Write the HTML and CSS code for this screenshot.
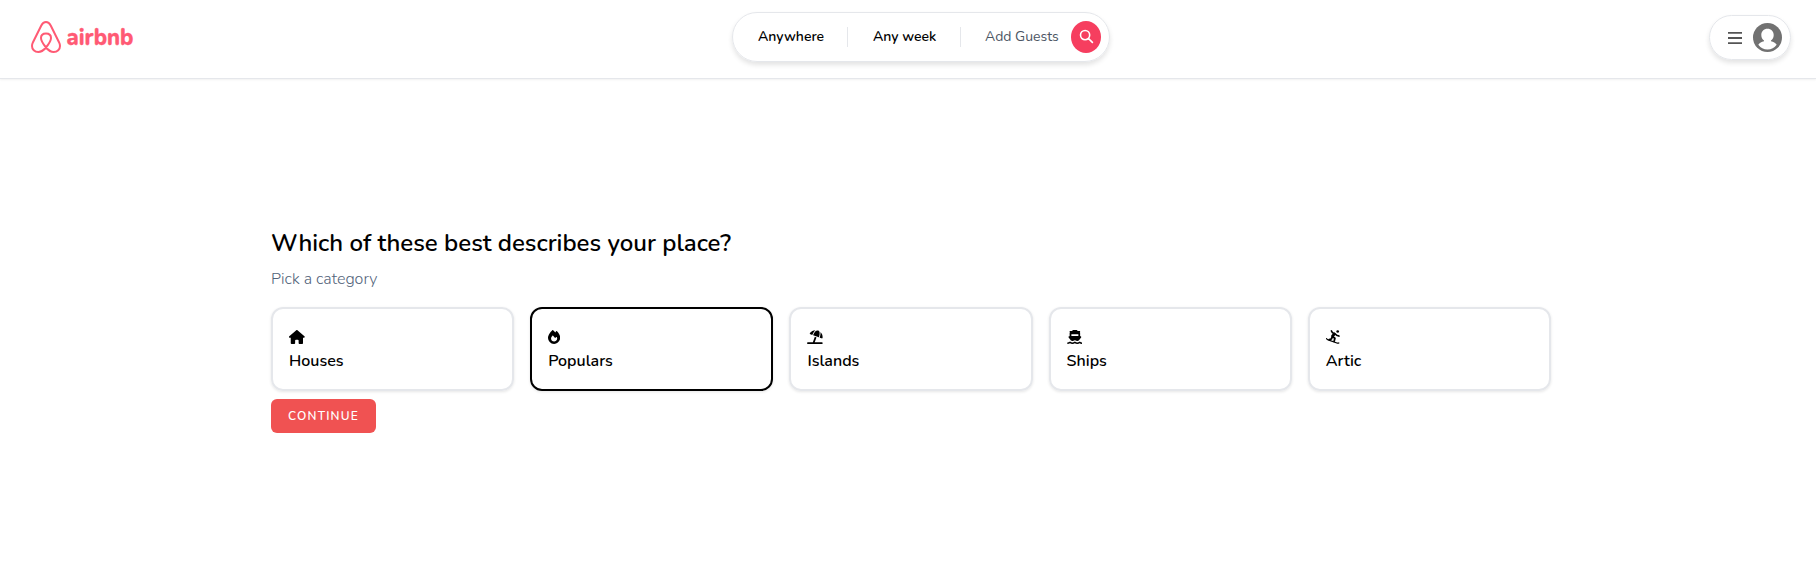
FILE: index.html
```
<!DOCTYPE html>
<html lang="en">
<head>
<meta charset="utf-8">
<title>airbnb</title>
<link rel="stylesheet" href="styles.css">
</head>
<body>
<header class="header">
  <a class="brand">
    <svg class="brand-mark" viewBox="0 0 30 32" fill="none" stroke="#ff5a74" stroke-width="2" stroke-linejoin="round"><path d="M15 26.5C12 22.8 10 19.600 10 17C10 14.200 12 12.500 15 12.500S20 14.200 20 17C20 19.600 18 22.800 15 26.500C12.400 29.600 10 31 7.300 31C3.600 31 1 28.200 1 24.900C1 23.700 1.400 22.500 2 21.200L10.300 4.500C11.500 2.100 12.800 1 15 1S18.500 2.100 19.700 4.500L28 21.200C28.600 22.500 29 23.700 29 24.900C29 28.200 26.400 31 22.700 31C20 31 17.600 29.600 15 26.500Z"/></svg>
    <svg class="brand-name" viewBox="0 0 68 26"><text x="-.5" y="20.500" textLength="67" lengthAdjust="spacingAndGlyphs">airbnb</text></svg>
  </a>
  <div class="search">
    <span class="seg where">Anywhere</span>
    <span class="seg week">Any week</span>
    <span class="seg guests">Add Guests</span>
    <span class="search-btn"><svg viewBox="0 0 16 16" fill="none" stroke="#fff" stroke-width="1.700" stroke-linecap="round"><circle cx="6.500" cy="6.500" r="4.900"/><path d="M10.200 10.200L14.300 14.300"/></svg></span>
  </div>
  <div class="account">
    <svg class="bars" viewBox="0 0 14 12"><path fill="#555" d="M0 0h14v1.800H0zM0 5.100h14v1.800H0zM0 10.200h14V12H0z"/></svg>
    <svg class="avatar" viewBox="0 0 29 29"><circle cx="14.500" cy="14.500" r="14.500" fill="#717171"/><path fill="#fff" d="M14.500 5.800c3.600 0 6.200 2.700 6.200 6.200 0 2.300-1 4.300-2.700 5.500v.8c2.400.6 4.500 1.800 5.700 3.400A11.900 11.900 0 0 1 14.500 26.500 11.900 11.900 0 0 1 5.300 21.700c1.200-1.600 3.300-2.800 5.700-3.400v-.8C9.300 16.300 8.300 14.300 8.300 12c0-3.500 2.600-6.200 6.200-6.200z"/></svg>
  </div>
</header>
<main class="main">
  <h1 class="title">Which of these best describes your place?</h1>
  <p class="subtitle">Pick a category</p>
  <div class="cards">
    <div class="card">
      <svg class="icon" viewBox="0 0 576 512"><path d="M575.800 255.500c0 18-15 32.100-32 32.100h-32l.7 160.200V472c0 22.100-17.900 40-40 40H392c-22.100 0-40-17.900-40-40v-88c0-17.700-14.300-32-32-32h-64c-17.700 0-32 14.300-32 32v88c0 22.100-17.900 40-40 40h-80c-22.100 0-40-17.900-40-40V287.600H32c-18 0-32-14-32-32.100 0-9 3-17 10-24L266.400 8c7-7 15-8 22-8s15 2 21 7l255.400 224.500c8 7 12 15 11 24z"/></svg>
      <span class="label">Houses</span>
    </div>
    <div class="card selected">
      <svg class="icon" viewBox="0 0 448 512"><path d="M159.300 5.400c7.800-7.300 19.900-7.200 27.700.1 27.600 25.900 53.500 53.800 77.700 84 11-14.400 23.500-30.100 37-42.900 7.900-7.400 20.100-7.400 28 .1 34.600 33 63.900 76.600 84.500 118 20.300 40.800 33.800 82.500 33.800 111.900C448 404.200 348.200 512 224 512 98.400 512 0 404.100 0 276.500c0-38.400 17.800-85.300 45.400-131.700C73.300 97.700 112.700 48.600 159.300 5.400zM225.700 416c25.300 0 47.700-7 68.800-21 42.100-29.400 53.400-88.200 28.100-134.400-4.500-9-16-9.600-22.500-2l-25.200 29.300c-6.600 7.600-18.500 7.400-24.700-.5-16.500-21-46-58.500-62.800-79.800-6.300-8-18.300-8.100-24.700-.1-33.800 42.500-50.800 69.300-50.800 99.400C112 375.400 162.600 416 225.700 416z"/></svg>
      <span class="label">Populars</span>
    </div>
    <div class="card">
      <svg class="icon" viewBox="0 0 576 512"><path d="M346.300 271.800l-60.100-21.900L214 448H32c-17.700 0-32 14.300-32 32s14.300 32 32 32H544c17.700 0 32-14.300 32-32s-14.300-32-32-32H282.100l64.200-176.200zm121.100-.2l-3.300 9.100 67.700 24.600c18.100 6.600 38-4.200 39.600-23.400 6.500-78.500-23.900-155.500-80.800-208.500 2 8 3.200 16.300 3.400 24.800l.2 6c1.800 57-7.300 113.800-26.800 167.400zM462 99.100c-1.100-34.400-22.500-64.800-54.400-77.400-.9-.4-1.900-.7-2.800-1.100-33-11.700-69.800-2.400-93.100 23.800l-4 4.500C272.400 88.300 245 134.200 226.800 184l-3.300 9.100L434 269.700l3.300-9.100c18.100-49.800 26.600-102.500 24.900-155.500l-.2-6zM107.200 112.900c-11.100 15.700-2.800 36.800 15.300 43.400l71 25.800 3.300-9.100c19.500-53.600 49.100-103 87.100-145.500l4-4.500c6.200-6.900 13.100-13 20.500-18.200-79.600 2.500-154.700 42.200-201.200 108z"/></svg>
      <span class="label">Islands</span>
    </div>
    <div class="card">
      <svg class="icon" viewBox="0 0 576 512"><path d="M224 0H352c17.700 0 32 14.300 32 32h75.100c20.600 0 31.600 24.300 18.100 39.800L456 96H120L98.800 71.800C85.300 56.300 96.300 32 116.900 32H192c0-17.700 14.300-32 32-32zM96 88H480v140c40 0 54 22 36 50l-84 110c-18 12-30 17-48.500 18h-16.900c-17.100-1.800-35-9-50.800-19.900-22.100-12-33.600-12-55.700 0-14.800 10.200-32.500 18-50.600 19.900h-16.600c-20-1-32-6-48.600-18L60 278c-18-28-4-50 36-50zm64 64v66H416v-66H160z"/><path d="M12 482c40 0 70-10 98-30 54 38 122 38 178 0 56 38 124 38 178 0 28 20 58 30 98 30" fill="none" stroke="#000" stroke-width="54"/></svg>
      <span class="label">Ships</span>
    </div>
    <div class="card">
      <svg class="icon" viewBox="0 0 14 14" fill="none" stroke="#000" stroke-linecap="round" stroke-linejoin="round"><circle cx="11.700" cy="1.500" r="1.350" fill="#000" stroke="none"/><path stroke-width="1.300" d="M.6 8.600c.2.700.7 1.100 1.500 1.300l8.800 3.100c.7.300 1.300.3 1.900 0"/><path stroke-width="1.600" d="M5.400.9l1 1.800 2.200.8 2 1.700 2.300.9"/><path stroke-width="2.800" d="M8.300 4.100L6.600 6"/><path stroke-width="1.800" d="M6.400 6.400l2.500 1.800-.8 3.200M6 7.500L5.300 9 3.200 9.600"/></svg>
      <span class="label">Artic</span>
    </div>
  </div>
  <button class="continue">CONTINUE</button>
</main>
</body>
</html>
```
FILE: styles.css
```
* { box-sizing: border-box; }
body {
  margin: 0;
  background: #fff;
  color: #000;
  font-family: Nunito, "Open Sans", sans-serif;
}
.header {
  display: grid;
  grid-template-columns: 701px 378px 1fr;
  align-items: center;
  height: 79px;
  padding: 0 25px 5px 31px;
  border-bottom: 1px solid #e5e7eb;
  box-shadow: 0 1px 2px rgba(0, 0, 0, .06);
}
.brand { display: flex; align-items: center; gap: 6px; }
.brand-mark { width: 30px; height: 32px; }
.brand-name { width: 68px; height: 26px; overflow: visible; }
.brand-name text { font: 800 23px Nunito, sans-serif; fill: #ff5a74; stroke: #ff5a74; stroke-width: .3px; }
.search {
  display: flex;
  align-items: center;
  height: 50px;
  padding-left: 25px;
  border: 1px solid #e5e7eb;
  border-radius: 25px;
  box-shadow: 0 3px 5px rgba(0, 0, 0, .11);
  font-size: 14px;
  font-weight: 600;
  line-height: 20px;
  white-space: nowrap;
}
.seg { height: 20px; }
.where { width: 90px; border-right: 1px solid #e5e7eb; }
.week { width: 113px; padding-left: 25px; border-right: 1px solid #e5e7eb; }
.guests { width: 110px; padding-left: 24px; color: #4b5563; font-weight: 400; }
.search-btn {
  display: flex;
  align-items: center;
  justify-content: center;
  width: 30px;
  height: 32px;
  border-radius: 50%;
  background: #f63e5f;
}
.search-btn svg { width: 15px; height: 15px; }
.account {
  justify-self: end;
  display: flex;
  align-items: center;
  gap: 11px;
  width: 82px;
  height: 45px;
  margin-top: 2px;
  padding-left: 18px;
  border: 1px solid #e5e7eb;
  border-radius: 23px;
  box-shadow: 0 3px 5px rgba(0, 0, 0, .11);
}
.bars { width: 14px; height: 12px; }
.avatar { width: 29px; height: 29px; }
.main { width: 1280px; margin: 148px 0 0 271px; }
.title { margin: 0; font-size: 24px; font-weight: 600; line-height: 32px; white-space: nowrap; }
.subtitle { margin: 8px 0 16px; font-size: 16px; font-weight: 300; line-height: 24px; color: #52637a; }
.cards { display: grid; grid-template-columns: repeat(5, 1fr); gap: 16px; }
.card {
  display: flex;
  flex-direction: column;
  align-items: flex-start;
  height: 84px;
  padding: 21px 16px 0;
  border: 2px solid #e5e7eb;
  border-radius: 12px;
  box-shadow: 0 1px 3px rgba(0, 0, 0, .1);
}
.selected { border-color: #000; }
.icon { height: 14px; width: auto; }
.label { margin-top: 5px; font-size: 16px; font-weight: 600; line-height: 24px; }
.continue {
  display: block;
  width: 105px;
  height: 34px;
  margin-top: 8px;
  padding: 0;
  border: 0;
  border-radius: 6px;
  background: #f05252;
  color: #fff;
  font: 600 12px Nunito, "Open Sans", sans-serif;
  letter-spacing: 1.200px;
}
```
